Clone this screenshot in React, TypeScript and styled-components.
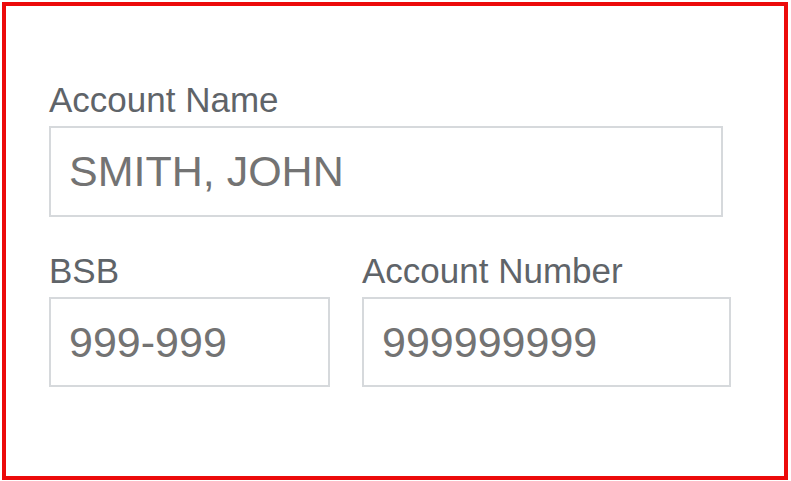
import React from 'react';
import styled, { createGlobalStyle } from 'styled-components';

const GlobalStyle = createGlobalStyle`
  html, body {
    margin: 0;
    padding: 0;
    background: #ffffff;
  }
  body {
    font-family: "Liberation Sans", Arial, sans-serif;
  }
`;

const Frame = styled.div`
  box-sizing: border-box;
  margin: 2px 0 0 2px;
  width: 786px;
  height: 478px;
  border: 4px solid #ec0a0a;
  padding: 77px 0 0 43px;
  background: #fff;
`;

const Field = styled.div<{ $width: number }>`
  display: flex;
  flex-direction: column;
  gap: 9px;
  width: ${(p) => p.$width}px;
`;

const Label = styled.label`
  font-size: 35px;
  line-height: 34px;
  color: #5f6469;
  white-space: nowrap;
`;

const Input = styled.input<{ $height: number }>`
  box-sizing: border-box;
  width: 100%;
  height: ${(p) => p.$height}px;
  margin: 0;
  border: 2px solid #d6d9dc;
  border-radius: 0;
  padding: 0 0 0 18px;
  font-family: "Liberation Sans", Arial, sans-serif;
  font-size: 43px;
  color: #737373;
  background: #fff;
  outline: none;
`;

const Row = styled.div`
  display: grid;
  grid-template-columns: 281px 369px;
  column-gap: 32px;
  margin-top: 37px;
`;

export default function App() {
  return (
    <>
      <GlobalStyle />
      <Frame>
        <Field $width={674}>
          <Label>Account Name</Label>
          <Input $height={91} defaultValue="SMITH, JOHN" readOnly />
        </Field>
        <Row>
          <Field $width={281}>
            <Label>BSB</Label>
            <Input $height={90} defaultValue="999-999" readOnly />
          </Field>
          <Field $width={369}>
            <Label>Account Number</Label>
            <Input $height={90} defaultValue="999999999" readOnly />
          </Field>
        </Row>
      </Frame>
    </>
  );
}
